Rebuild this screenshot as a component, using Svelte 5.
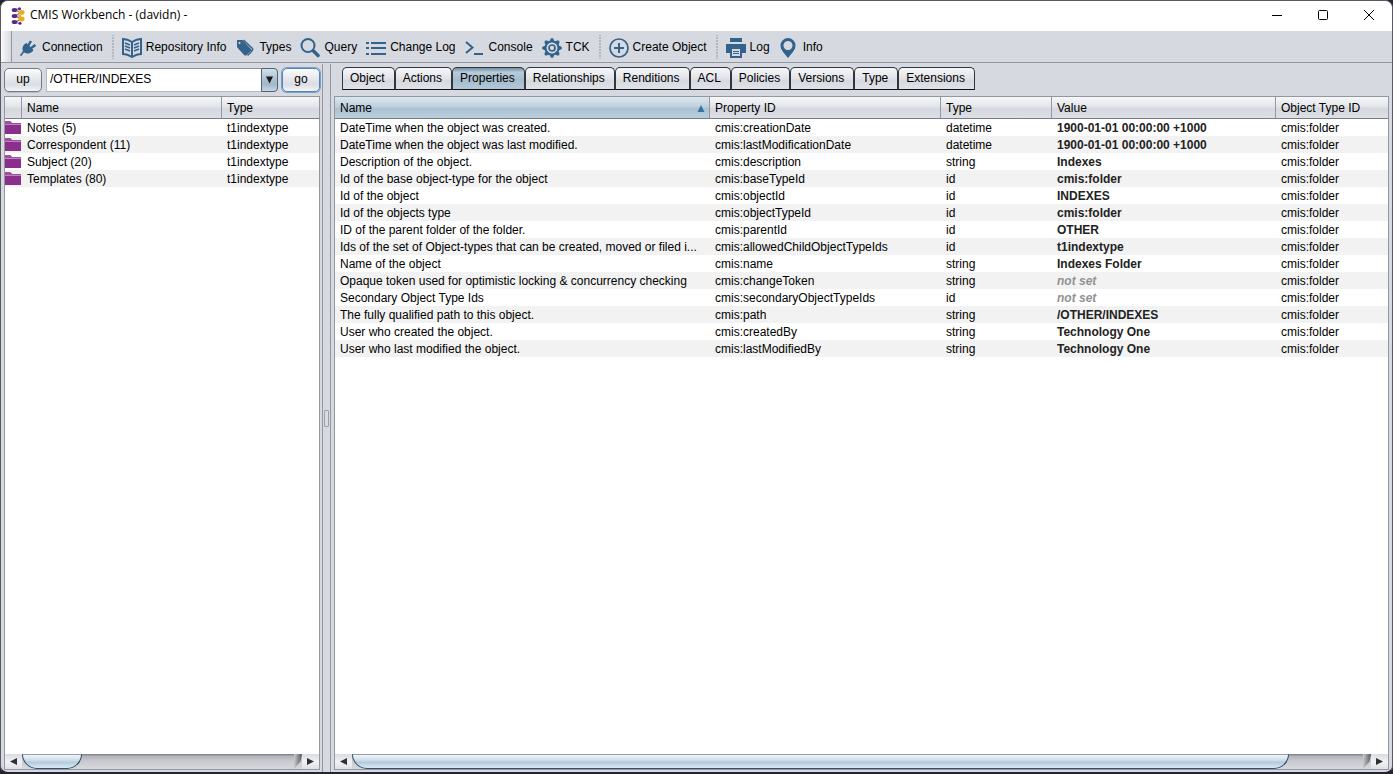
<script>
  const types = 't1indextype';
  const folders = ['Notes (5)', 'Correspondent (11)', 'Subject (20)', 'Templates (80)'];
  const tabs = ['Object', 'Actions', 'Properties', 'Relationships', 'Renditions', 'ACL', 'Policies', 'Versions', 'Type', 'Extensions'];
  let active = $state('Properties');
  let path = $state('/OTHER/INDEXES');
  const rows = [
    ['DateTime when the object was created.', 'cmis:creationDate', 'datetime', '1900-01-01 00:00:00 +1000'],
    ['DateTime when the object was last modified.', 'cmis:lastModificationDate', 'datetime', '1900-01-01 00:00:00 +1000'],
    ['Description of the object.', 'cmis:description', 'string', 'Indexes'],
    ['Id of the base object-type for the object', 'cmis:baseTypeId', 'id', 'cmis:folder'],
    ['Id of the object', 'cmis:objectId', 'id', 'INDEXES'],
    ['Id of the objects type', 'cmis:objectTypeId', 'id', 'cmis:folder'],
    ['ID of the parent folder of the folder.', 'cmis:parentId', 'id', 'OTHER'],
    ['Ids of the set of Object-types that can be created, moved or filed i...', 'cmis:allowedChildObjectTypeIds', 'id', 't1indextype'],
    ['Name of the object', 'cmis:name', 'string', 'Indexes Folder'],
    ['Opaque token used for optimistic locking & concurrency checking', 'cmis:changeToken', 'string', null],
    ['Secondary Object Type Ids', 'cmis:secondaryObjectTypeIds', 'id', null],
    ['The fully qualified path to this object.', 'cmis:path', 'string', '/OTHER/INDEXES'],
    ['User who created the object.', 'cmis:createdBy', 'string', 'Technology One'],
    ['User who last modified the object.', 'cmis:lastModifiedBy', 'string', 'Technology One']
  ];
  const tools = [
    ['Connection'], 'sep', ['Repository Info'], ['Types'], ['Query'], ['Change Log'], ['Console'], ['TCK'],
    'sep', ['Create Object'], 'sep', ['Log'], ['Info']
  ];
  const teeth = [0, 45, 90, 135, 180, 225, 270, 315];
</script>

{#snippet icon(name)}
  <svg class="icon" viewBox="0 0 20 20" aria-hidden="true">
    {#if name === 'Connection'}
      <path class="fill" d="M8.500 5 L15.500 12 C14 15 10.500 16.500 7.500 15 L6 14.500 C4.500 15.500 4.500 18 2.500 18 L2 16.800 C3.500 16 3.500 14.500 5 13 C3.500 10 5.500 6 8.500 5Z" />
      <path class="line" stroke-width="2.400" d="M10 8 L13 3 M12.500 10.500 L17.500 7" />
    {:else if name === 'Repository Info'}
      <path class="line" stroke-width="2" d="M10 4 C7 2 4 1 1 1 V16 C4 16 7 17 10 19 C13 17 16 16 19 16 V1 C16 1 13 2 10 4Z M10 4 V18" />
      <path class="line" stroke-width="1.500" d="M3 5 L8 7 M3 8 L8 10 M3 11 L8 13 M12 7 L17 5 M12 10 L17 8 M12 13 L17 11" />
    {:else if name === 'Types'}
      <path class="fill" d="M2 2 L7.500 2 L16 11 C17 12 16 13 11 17.500 C10 18 9 17.500 2 9Z" />
      <path class="line" stroke-width="1.400" d="M8.500 2 L17.500 10.500 C18.300 11.500 18 12 12.500 17.500" />
      <circle cx="4.500" cy="5" r="1.100" fill="#d6d9e0" />
    {:else if name === 'Query'}
      <circle class="line" cx="8" cy="7.500" r="6.500" stroke-width="2" />
      <path class="line" stroke-width="3.500" stroke-linecap="round" d="M13.500 13 L18 17.500" />
    {:else if name === 'Change Log'}
      <path class="line" stroke-width="2" d="M0 5 H3 M5 5 H20 M0 10 H3 M5 10 H20 M0 16 H3 M5 16 H20" />
    {:else if name === 'Console'}
      <path class="line" stroke-width="2" d="M1 4 L7.500 9.500 L1 15 M9 16 H18" />
    {:else if name === 'TCK'}
      {#each teeth as angle}
        <path class="fill" d="M6.800 4.500 L9 0.200 H11 L13.200 4.500Z" transform="rotate({angle} 10 10)" />
      {/each}
      <circle class="line" cx="10" cy="10" r="6.300" stroke-width="1.800" />
      <circle cx="10" cy="10" r="5.400" fill="#d6d9e0" />
      <circle class="line" cx="10" cy="10" r="3" stroke-width="1.700" />
    {:else if name === 'Create Object'}
      <circle class="line" cx="10" cy="10" r="9" stroke-width="1.700" />
      <path class="line" stroke-width="2" d="M5 10 H15 M10 5 V15" />
    {:else if name === 'Log'}
      <path class="fill" d="M4 0 H16 V4 H4Z M0 6 H20 V15 H16 V11 H4 V15 H0Z" />
      <path class="line" stroke-width="2" d="M5 11 V19 H15 V11" />
      <path class="line" stroke-width="1" d="M7 13.500 H13 M7 15.500 H13" />
    {:else}
      <path class="fill" fill-rule="evenodd" d="M9 0 A7.500 7.500 0 0 0 1.500 7.500 C1.500 12 5 15 9 20 C13 15 16.500 12 16.500 7.500 A7.500 7.500 0 0 0 9 0Z M9 3 A4.500 4.500 0 1 1 8.990 3Z" />
    {/if}
  </svg>
{/snippet}

{#snippet scrollbar(kind)}
  <div class="scrollbar">
    <button class="arrow" aria-label="Scroll left"><svg viewBox="0 0 8 8"><path d="M0 4 L8 0 V8Z" /></svg></button>
    <div class="track"><div class="thumb {kind}"></div><div class="cap"></div></div>
    <button class="arrow" aria-label="Scroll right"><svg viewBox="0 0 8 8"><path d="M8 4 L0 0 V8Z" /></svg></button>
  </div>
{/snippet}

<div class="window">
  <header class="titlebar">
    <svg class="logo" viewBox="0 0 14 18" aria-hidden="true">
      <path d="M4 3 L8 1.500 M4 9 L10 5.500 M4 9 L10 12 M4 3 L10 5.500 M4 15.500 L10 12 M4 15.500 L9 16.500" stroke="#8b6b8d" stroke-width="1.200" />
      <g fill="#55288a"><ellipse cx="3.500" cy="3" rx="2.800" ry="2" /><ellipse cx="3.500" cy="9" rx="2.800" ry="2" /><ellipse cx="3.500" cy="15" rx="2.800" ry="2" /><circle cx="8.500" cy="1.800" r="1.500" /><circle cx="9" cy="16.300" r="1.500" /></g>
      <g fill="#e9ae1d"><ellipse cx="10.500" cy="5.500" rx="3" ry="2.400" /><ellipse cx="10.500" cy="12" rx="3" ry="2.400" /><ellipse cx="8.500" cy="9" rx="1.600" ry="1.200" /></g>
    </svg>
    <span class="title">CMIS Workbench - (davidn) -</span>
    <div class="controls">
      <button aria-label="Minimize"><svg viewBox="0 0 12 12"><path d="M1 5.500 H11" /></svg></button>
      <button aria-label="Maximize"><svg viewBox="0 0 12 12"><rect x="1.500" y="0.500" width="9" height="9" rx="1" /></svg></button>
      <button aria-label="Close"><svg viewBox="0 0 12 12"><path d="M1 0 L11 10 M11 0 L1 10" /></svg></button>
    </div>
  </header>

  <div class="toolbar" role="toolbar" aria-label="Main">
    <div class="grip"></div>
    {#each tools as tool}
      {#if tool === 'sep'}
        <div class="sep"></div>
      {:else}
        <button class="tool">{@render icon(tool[0])}<span>{tool[0]}</span></button>
      {/if}
    {/each}
  </div>

  <div class="panes">
    <section class="left">
      <div class="pathbar">
        <button class="push">up</button>
        <div class="combo">
          <input aria-label="Path" bind:value={path} />
          <button aria-label="Recent paths"><svg viewBox="0 0 8 8"><path d="M0 0 H8 L4 8Z" /></svg></button>
        </div>
        <button class="push focus">go</button>
      </div>
      <div class="sheet">
        <div class="body">
          <table>
            <colgroup><col class="c-icon" /><col class="c-folder" /><col /></colgroup>
            <thead><tr><th aria-label="Icon"></th><th>Name</th><th>Type</th></tr></thead>
            <tbody>
              {#each folders as name}
                <tr>
                  <td class="pic"><svg viewBox="0 0 16 13" aria-hidden="true"><path d="M0 0 H5 L7 2 H16 V13 H0Z" fill="#8b2f8c" /><path d="M0 0 H5 L7 2 H16 V3 H0Z" fill="#a14fa3" /><path d="M0 3.500 H16" stroke="#bd83be" /></svg></td>
                  <td>{name}</td>
                  <td>{types}</td>
                </tr>
              {/each}
            </tbody>
          </table>
        </div>
        {@render scrollbar('short')}
      </div>
    </section>

    <div class="divider"><span></span></div>

    <section class="right">
      <div class="tabs" role="tablist">
        {#each tabs as tab}
          <button role="tab" aria-selected={tab === active} class:active={tab === active} onclick={() => (active = tab)}>{tab}</button>
        {/each}
      </div>
      <div class="sheet">
        <div class="body">
          <table>
            <colgroup><col class="c-name" /><col class="c-id" /><col class="c-type" /><col class="c-value" /><col /></colgroup>
            <thead>
              <tr>
                <th class="sorted"><div>Name<svg viewBox="0 0 8 8"><path d="M4 0 L8 8 H0Z" /></svg></div></th>
                <th>Property ID</th><th>Type</th><th>Value</th><th>Object Type ID</th>
              </tr>
            </thead>
            <tbody>
              {#each rows as [name, id, type, value]}
                <tr>
                  <td>{name}</td><td>{id}</td><td>{type}</td>
                  <td class="value" class:unset={value === null}>{value ?? 'not set'}</td>
                  <td>cmis:folder</td>
                </tr>
              {/each}
            </tbody>
          </table>
        </div>
        {@render scrollbar('long')}
      </div>
    </section>
  </div>
</div>

<style>
  :global(body) { background: #25232e; }
  * { box-sizing: border-box; }
  button, input { font: inherit; color: inherit; margin: 0; padding: 0; border: 0; background: none; }

  .window {
    height: 100vh;
    display: flex;
    flex-direction: column;
    border: 1px solid #5c5863;
    border-bottom: 2px solid #25232e;
    border-radius: 8px;
    overflow: hidden;
    background: #d6d9e0;
    color: #000;
    font: 12px/17px "Liberation Sans", Arial, sans-serif;
  }

  .titlebar { flex: none; height: 30px; display: flex; align-items: center; background: #fff; padding-left: 10px; }
  .logo { width: 14px; height: 18px; margin-right: 5px; }
  .title { font-family: "Open Sans", "Noto Sans", sans-serif; line-height: 16px; padding-bottom: 2px; }
  .controls { margin-left: auto; display: flex; height: 100%; }
  .controls button { width: 46px; display: grid; place-items: center; }
  .controls svg { width: 12px; height: 12px; fill: none; stroke: #000; overflow: visible; }

  .toolbar { flex: none; height: 32px; display: flex; align-items: center; border-bottom: 1px solid #9297a1; }
  .grip { width: 11px; height: 100%; margin-right: 2px; border-right: 1px solid #9297a1; background: linear-gradient(90deg, #fafafb, #d6d9e0); }
  .tool { display: flex; align-items: center; gap: 4px; padding: 2px 5px 0 4px; white-space: nowrap; }
  .icon { width: 20px; height: 20px; }
  .icon .fill { fill: #33628c; }
  .icon .line { fill: none; stroke: #33628c; }
  .sep { width: 10px; height: 24px; background: radial-gradient(circle, #8d929c 0 1px, transparent 1px) center / 10px 3px repeat-y; }

  .panes { flex: 1; min-height: 0; display: flex; padding-top: 1px; }
  .left { flex: none; width: 322px; display: flex; flex-direction: column; padding: 2px 2px 2px 3px; border-right: 1px solid #9297a1; }
  .right { flex: 1; min-width: 0; display: flex; flex-direction: column; padding: 2px 3px 2px; border-left: 1px solid #9297a1; }
  .divider { flex: none; width: 7px; display: grid; place-items: center; }
  .divider span { width: 5px; height: 17px; border: 1px solid #9aa1ad; border-radius: 1px; background: #d9dce3; }

  .pathbar { flex: none; height: 30px; display: flex; align-items: center; gap: 4px; padding-bottom: 3px; }
  .push { width: 38px; height: 24px; border: 1px solid #767b85; border-radius: 5px; background: linear-gradient(#fcfcfd, #e3e5ea 50%, #dadde3 70%, #f4f5f7); box-shadow: 0 1px 0 #b9bdc6; }
  .push.focus { border-color: #5b83ac; box-shadow: 0 0 0 1px #73a4d1; }
  .combo { flex: 1; min-width: 0; height: 24px; display: flex; }
  .combo input { flex: 1; min-width: 0; padding-left: 3px; background: #fff; border: 1px solid #b4b8c0; border-top-color: #8c9098; border-right: 0; outline: 0; }
  .combo button { width: 17px; display: grid; place-items: center; border: 1px solid #4e6375; border-radius: 0 4px 4px 0; background: linear-gradient(#d4e0e9, #a9bfcf 50%, #a2b9ca 70%, #c7d7e2); }
  .combo svg { width: 7px; height: 8px; fill: #16191d; }

  .sheet { flex: 1; min-height: 0; display: flex; flex-direction: column; border: 1px solid #9297a1; background: #fff; }
  .body { flex: 1; min-height: 0; overflow: hidden; }
  table { width: 100%; table-layout: fixed; border-collapse: separate; border-spacing: 0; }
  .c-icon { width: 17px; }
  .c-folder { width: 200px; }
  .c-name { width: 375px; }
  .c-id { width: 231px; }
  .c-type { width: 111px; }
  .c-value { width: 224px; }
  th, td { padding: 2px 5px 0; text-align: left; white-space: nowrap; overflow: hidden; height: 17px; line-height: 15px; font-weight: 400; }
  th { height: 22px; border-right: 1px solid #9297a1; border-bottom: 1px solid #767b85; background: linear-gradient(#f6f7f8, #e3e5e9 45%, #d5d8df 55%, #dddfe5); }
  th:last-child { border-right: 0; }
  th.sorted { background: linear-gradient(#dbe6ee, #bfd1de 45%, #acc2d1 55%, #bacfdd); }
  th div { display: flex; align-items: center; justify-content: space-between; }
  th svg { width: 8px; height: 7px; margin-right: -1px; fill: #3d6f9f; }
  tbody tr:nth-child(even) { background: #f2f2f2; }
  td.pic { padding: 0; }
  .pic svg { display: block; width: 16px; height: 13px; }
  .value { font-weight: 700; color: #222; }
  .value.unset { font-style: italic; color: #929292; }

  .tabs { flex: none; display: flex; height: 30px; padding: 1px 0 0 8px; }
  .tabs button { height: 23px; padding: 0 9px 0 7px; border: 1px solid #34363e; border-bottom: 1px solid #10121a; border-radius: 5px 5px 0 0; background: linear-gradient(#f6f7f9, #e1e3e8 50%, #d6d9df 60%, #e0e2e8); }
  .tabs button.active { background: linear-gradient(#6f8da5, #b9cbd9 20%, #a5bccd 55%, #b3c8d7); }

  .scrollbar { flex: none; height: 15px; display: flex; background: #d6d9e0; }
  .arrow { width: 17px; display: grid; place-items: center; background: linear-gradient(#d9dbdf, #f1f2f4 50%, #dfe1e5); }
  .arrow svg { width: 7px; height: 7px; fill: #2f3135; }
  .track { flex: 1; display: flex; justify-content: space-between; background: linear-gradient(#77797f, #b3b5ba 15%, #c9cbd0 50%, #d7d9dd); }
  .thumb { border: 1px solid #35506a; border-top-color: #8d9dab; border-radius: 0 0 16px 16px; background: linear-gradient(#f0f5f9, #c9dae6 45%, #b1cadb 55%, #d8ebf6); }
  .thumb.short { width: 60px; }
  .thumb.long { width: 92%; }
  .cap { width: 8px; background: linear-gradient(90deg, #c9cbd0, #55575c); clip-path: polygon(0 0, 100% 0, 80% 50%, 0 100%); }
</style>
